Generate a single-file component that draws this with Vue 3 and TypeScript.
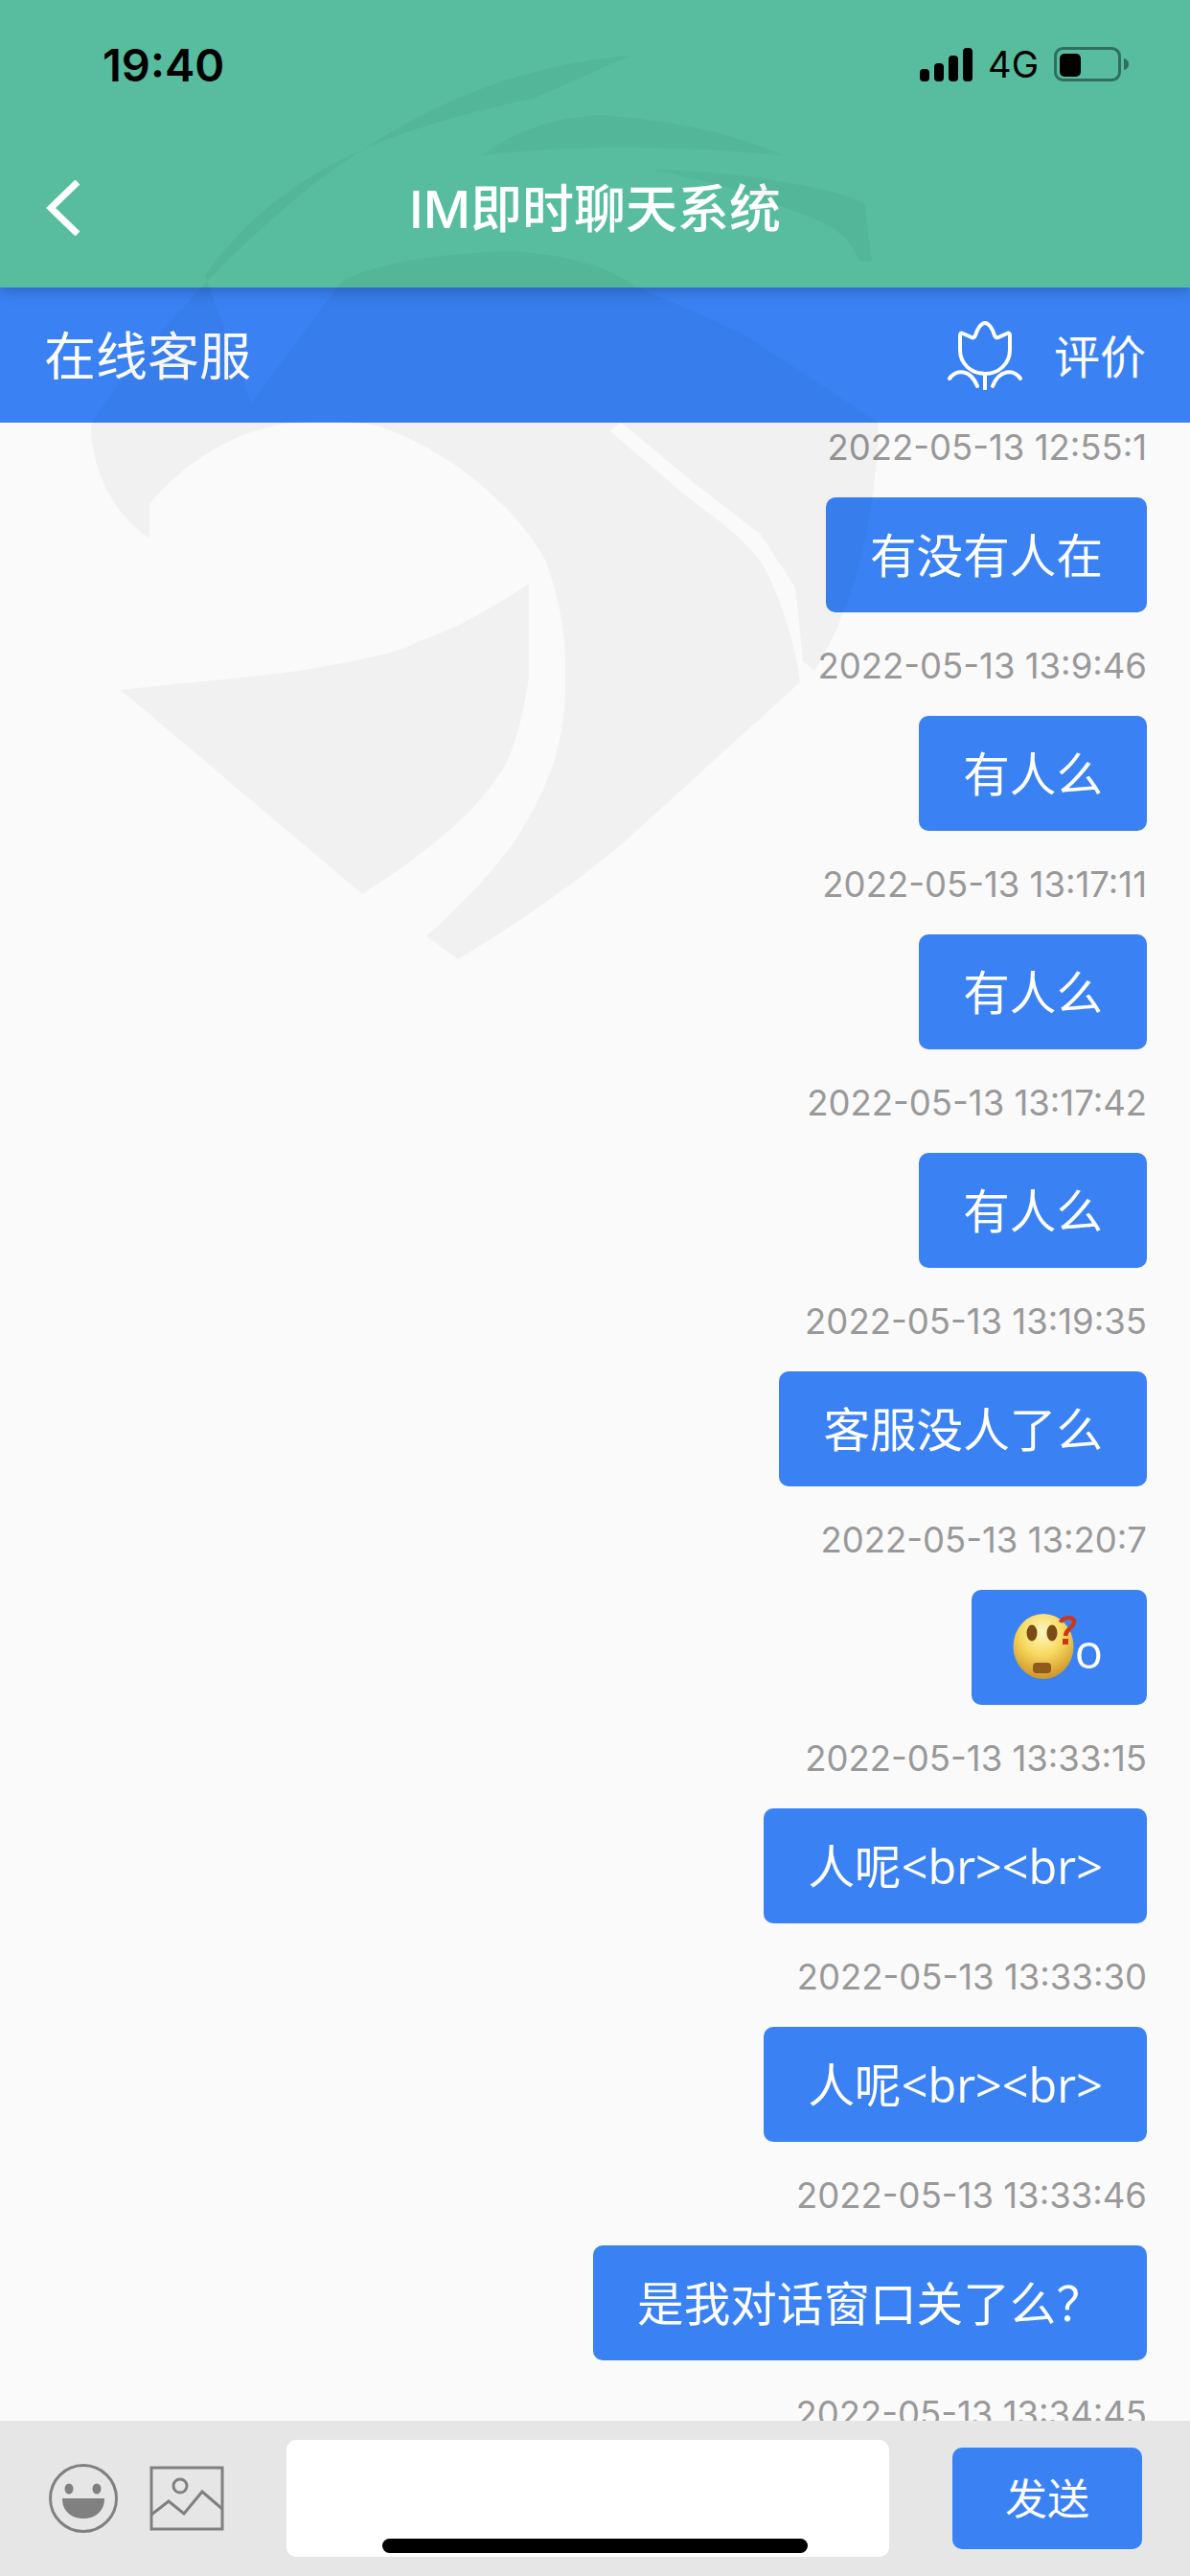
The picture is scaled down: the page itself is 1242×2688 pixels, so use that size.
<script setup lang="ts">
interface Message {
  time: string
  text: string
  emoji?: boolean
}

const messages: Message[] = [
  { time: '2022-05-13 12:55:1', text: '有没有人在' },
  { time: '2022-05-13 13:9:46', text: '有人么' },
  { time: '2022-05-13 13:17:11', text: '有人么' },
  { time: '2022-05-13 13:17:42', text: '有人么' },
  { time: '2022-05-13 13:19:35', text: '客服没人了么' },
  { time: '2022-05-13 13:20:7', text: 'o', emoji: true },
  { time: '2022-05-13 13:33:15', text: '人呢<br><br>' },
  { time: '2022-05-13 13:33:30', text: '人呢<br><br>' },
  { time: '2022-05-13 13:33:46', text: '是我对话窗口关了么？' },
  { time: '2022-05-13 13:34:45', text: '' }
]
</script>

<template>
  <div class="page">
    <header class="top">
      <div class="status">
        <span class="clock">19:40</span>
        <div class="status-right">
          <svg class="signal" width="55" height="35" viewBox="0 0 55 35">
            <rect x="0" y="22" width="10" height="13" rx="4" />
            <rect x="15" y="16" width="10" height="19" rx="4" />
            <rect x="30" y="8" width="10" height="27" rx="4" />
            <rect x="45" y="0" width="10" height="35" rx="4" />
          </svg>
          <span class="net">4G</span>
          <svg class="battery" width="78" height="36" viewBox="0 0 78 36">
            <rect x="1.5" y="1.5" width="67" height="33" rx="8" fill="none" stroke="#2f6e60" stroke-width="3" />
            <rect x="6" y="7" width="22" height="24" rx="5" fill="#000" />
            <path d="M73 12 C77 13 78 16 78 18 C78 20 77 23 73 24 Z" fill="#2f6e60" />
          </svg>
        </div>
      </div>
      <div class="nav">
        <svg class="back" width="36" height="58" viewBox="0 0 36 58">
          <path d="M33 2 L5 29 L33 56" fill="none" stroke="#fff" stroke-width="7" />
        </svg>
        <h1 class="title">IM即时聊天系统</h1>
      </div>
    </header>

    <div class="service">
      <span class="service-name">在线客服</span>
      <div class="rate">
        <svg width="80" height="72" viewBox="0 0 80 72" fill="none" stroke="#fff" stroke-width="4" stroke-linecap="round">
          <path d="M14 15 C14 13 15 12 17 13 L26 17 C28 18 29 17 30 15 C32 8 36 2 40 2 C44 2 48 8 50 15 C51 17 52 18 54 17 L63 13 C65 12 66 13 66 15 V30 C66 45 54 55 40 55 C26 55 14 45 14 30 Z" />
          <path d="M40 55 V71" />
          <path d="M3 60 C10 50 25 50 32 68" />
          <path d="M77 60 C70 50 55 50 48 68" />
        </svg>
        <span class="rate-text">评价</span>
      </div>
    </div>

    <main class="chat">
      <div class="list">
        <div v-for="(m, i) in messages" :key="i" class="item">
          <div class="time">{{ m.time }}</div>
          <div v-if="m.text" class="bubble">
            <svg v-if="m.emoji" class="emoji" width="68" height="70" viewBox="0 0 68 70">
              <defs>
                <radialGradient id="face" cx="48%" cy="28%" r="72%">
                  <stop offset="0%" stop-color="#fff6c0" />
                  <stop offset="50%" stop-color="#f7d95f" />
                  <stop offset="100%" stop-color="#cf9427" />
                </radialGradient>
              </defs>
              <ellipse cx="32" cy="34" rx="31.5" ry="34" fill="url(#face)" />
              <ellipse cx="20" cy="20" rx="5.5" ry="8.5" fill="#7c4a14" />
              <ellipse cx="41" cy="20" rx="5.5" ry="8.5" fill="#7c4a14" />
              <rect x="21" y="51" width="19" height="11" rx="4" fill="#8f5a1c" />
              <path d="M50 9 C52 3 65 2 64 9 C63 15 56 15 55 23" fill="none" stroke="#c8391c" stroke-width="4.5" />
              <rect x="52" y="26" width="6" height="6" fill="#c8391c" />
            </svg>
            <span class="bubble-text" :class="{ 'bubble-text--low': m.emoji }">{{ m.text }}</span>
          </div>
        </div>
      </div>
    </main>

    <footer class="bottom">
      <svg class="smile" width="72" height="72" viewBox="0 0 72 72">
        <circle cx="36" cy="36" r="34.5" fill="none" stroke="#808080" stroke-width="3" />
        <ellipse cx="21" cy="26" rx="4.5" ry="5.5" fill="#808080" />
        <ellipse cx="50" cy="26" rx="4.5" ry="5.5" fill="#808080" />
        <path d="M14 36 H58 C58 50 48 57 36 57 C24 57 14 50 14 36 Z" fill="#808080" />
      </svg>
      <svg class="picture" width="78" height="68" viewBox="0 0 78 68" fill="none" stroke="#808080" stroke-width="3">
        <rect x="2" y="2" width="74" height="64" />
        <circle cx="32" cy="21" r="7" />
        <path d="M2 51 L20 37 L36 50 L55 27 L76 45" />
      </svg>
      <div class="input"></div>
      <button type="button" class="send">发送</button>
    </footer>

    <div class="home-bar"></div>

    <svg class="watermark" width="1242" height="1100" viewBox="0 0 1242 1100">
      <path
        d="M658 58 C520 68 400 130 300 215 C200 300 120 400 95 443 C95 480 110 530 156 562 L156 526 C185 490 235 455 284 445 C320 436 365 438 396 445 C470 470 540 530 570 586 C585 630 590 660 590 700 C592 770 575 815 545 865 C525 900 480 945 445 977 L478 1001 C530 970 590 930 650 880 L835 712 C832 680 815 620 794 586 C770 555 745 540 718 519 L636 449 L648 441 L664 300 C640 280 600 268 547 263 C500 260 400 270 357 293 L262 420 L214 287 C270 210 340 165 440 133 C480 120 520 110 557 103 Z
           M126 720 C190 712 300 704 340 695 C380 688 420 680 437 669 C480 655 520 630 552 609 L552 708 C545 750 540 770 529 795 C500 850 430 900 378 933 Z
           M503 162 C540 135 580 122 627 120 C700 125 770 140 817 162 C740 155 620 148 503 162 Z
           M680 177 C730 178 780 182 817 190 C860 196 890 205 903 213 L910 273 L897 273 C890 255 880 245 867 237 C850 228 835 222 820 217 C795 208 770 198 740 190 Z
           M664 300 L707 317 L773 347 L840 390 L917 441 C915 520 900 620 850 700 L838 690 L830 613 L794 558 L718 499 L651 443 L648 441 Z"
      />
    </svg>
  </div>
</template>

<style scoped>
.page {
  position: relative;
  display: flex;
  flex-direction: column;
  width: 1242px;
  height: 2688px;
  overflow: hidden;
  background: #fafafa;
  font-family: Inter, "Noto Sans CJK SC", sans-serif;
}

/* header */
.top {
  position: relative;
  z-index: 2;
  height: 300px;
  flex: none;
  background: #57bd9e;
  box-shadow: 0 3px 14px rgba(0, 0, 0, 0.25);
}

.status {
  display: flex;
  justify-content: space-between;
  align-items: center;
  height: 134px;
  padding: 0 64px 0 107px;
}

.clock {
  font-size: 47px;
  font-weight: 600;
  color: #000;
}

.status-right {
  display: flex;
  align-items: center;
  gap: 16px;
}

.net {
  font-size: 38px;
  color: #000;
}

.nav {
  position: relative;
  display: flex;
  align-items: center;
  justify-content: center;
  height: 166px;
  padding-bottom: 6px;
  box-sizing: border-box;
}

.back {
  position: absolute;
  left: 48px;
  top: 54px;
}

.title {
  margin: 0;
  font-size: 54px;
  font-weight: 500;
  color: #fff;
}

.service {
  display: flex;
  flex: none;
  align-items: center;
  justify-content: space-between;
  height: 141px;
  padding: 0 46px;
  background: #3a82f4;
  color: #fff;
}

.service-name {
  margin-bottom: 4px;
  font-size: 54px;
}

.rate {
  display: flex;
  align-items: center;
  gap: 32px;
  font-size: 48px;
}

.rate-text {
  margin-bottom: 4px;
}

/* messages */
.chat {
  flex: 1;
  overflow: hidden;
}

.list {
  display: flex;
  flex-direction: column;
  align-items: flex-end;
  margin-top: -30px;
  padding-right: 45px;
}

.item {
  display: flex;
  flex-direction: column;
  align-items: flex-end;
}

.time {
  display: flex;
  align-items: center;
  height: 108px;
  padding-top: 3px;
  box-sizing: border-box;
  font-size: 36.5px;
  color: #999;
}

.bubble {
  display: flex;
  align-items: center;
  height: 120px;
  padding: 0 46px;
  border-radius: 10px;
  background: #3a82f4;
  color: #fff;
  font-family: "Open Sans", "Noto Sans CJK SC", sans-serif;
  font-size: 48.6px;
  white-space: nowrap;
}

.bubble-text {
  margin-bottom: 5px;
}

.bubble-text--low {
  margin: 6px 0 0;
}

.emoji {
  flex: none;
  margin: 0 -3px;
}

/* input bar */
.bottom {
  display: flex;
  flex: none;
  align-items: center;
  height: 162px;
  padding: 0 50px 0 51px;
  background: #e6e6e6;
}

.picture {
  margin-left: 33px;
}

.input {
  width: 629px;
  height: 122px;
  margin-left: 65px;
  border-radius: 10px;
  background: #fff;
}

.send {
  width: 198px;
  height: 106px;
  margin-left: 66px;
  padding: 0 0 4px;
  border: none;
  border-radius: 10px;
  background: #3a82f4;
  color: #fff;
  font: inherit;
  font-size: 44px;
}

.home-bar {
  position: absolute;
  left: 399px;
  bottom: 24px;
  width: 444px;
  height: 15px;
  border-radius: 8px;
  background: #000;
}

.watermark {
  position: absolute;
  z-index: 3;
  top: 0;
  left: 0;
  pointer-events: none;
  fill: rgba(0, 0, 0, 0.035);
}
</style>
